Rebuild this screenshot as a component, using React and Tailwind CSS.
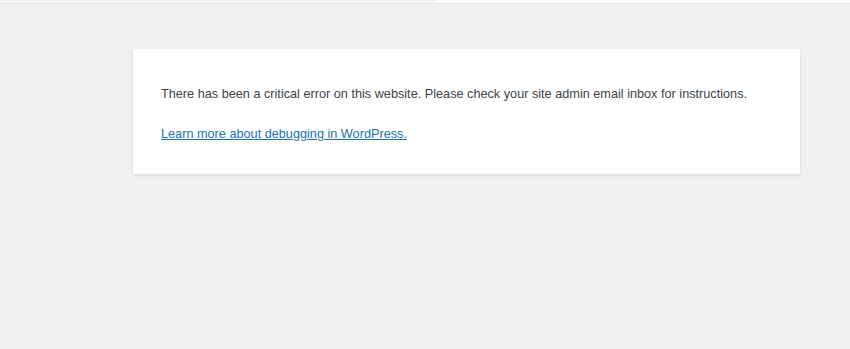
export default function App() {
  return (
    <div className="w-[850px] h-[349px] bg-[#f1f1f1] overflow-hidden" style={{ fontFamily: '"Liberation Sans", Arial, sans-serif' }}>
      <div className="h-[4px] bg-white border-b border-[#e2e2e2] flex items-start">
        <div className="w-[437px] h-[2px] bg-[#f3f3f3]" />
      </div>
      <div className="ml-[133px] mt-[45px] w-[667px] h-[125px] bg-white shadow-[0_1px_3px_rgba(0,0,0,0.13)] px-[28px] pt-[35px]">
        <p className="text-[12.7px] leading-[20px] text-[#3c434a]">
          There has been a critical error on this website. Please check your site admin email inbox for instructions.
        </p>
        <p className="mt-[20px] text-[12.7px] leading-[20px]">
          <a href="#" className="text-[#2271b1] underline">Learn more about debugging in WordPress.</a>
        </p>
      </div>
    </div>
  );
}
